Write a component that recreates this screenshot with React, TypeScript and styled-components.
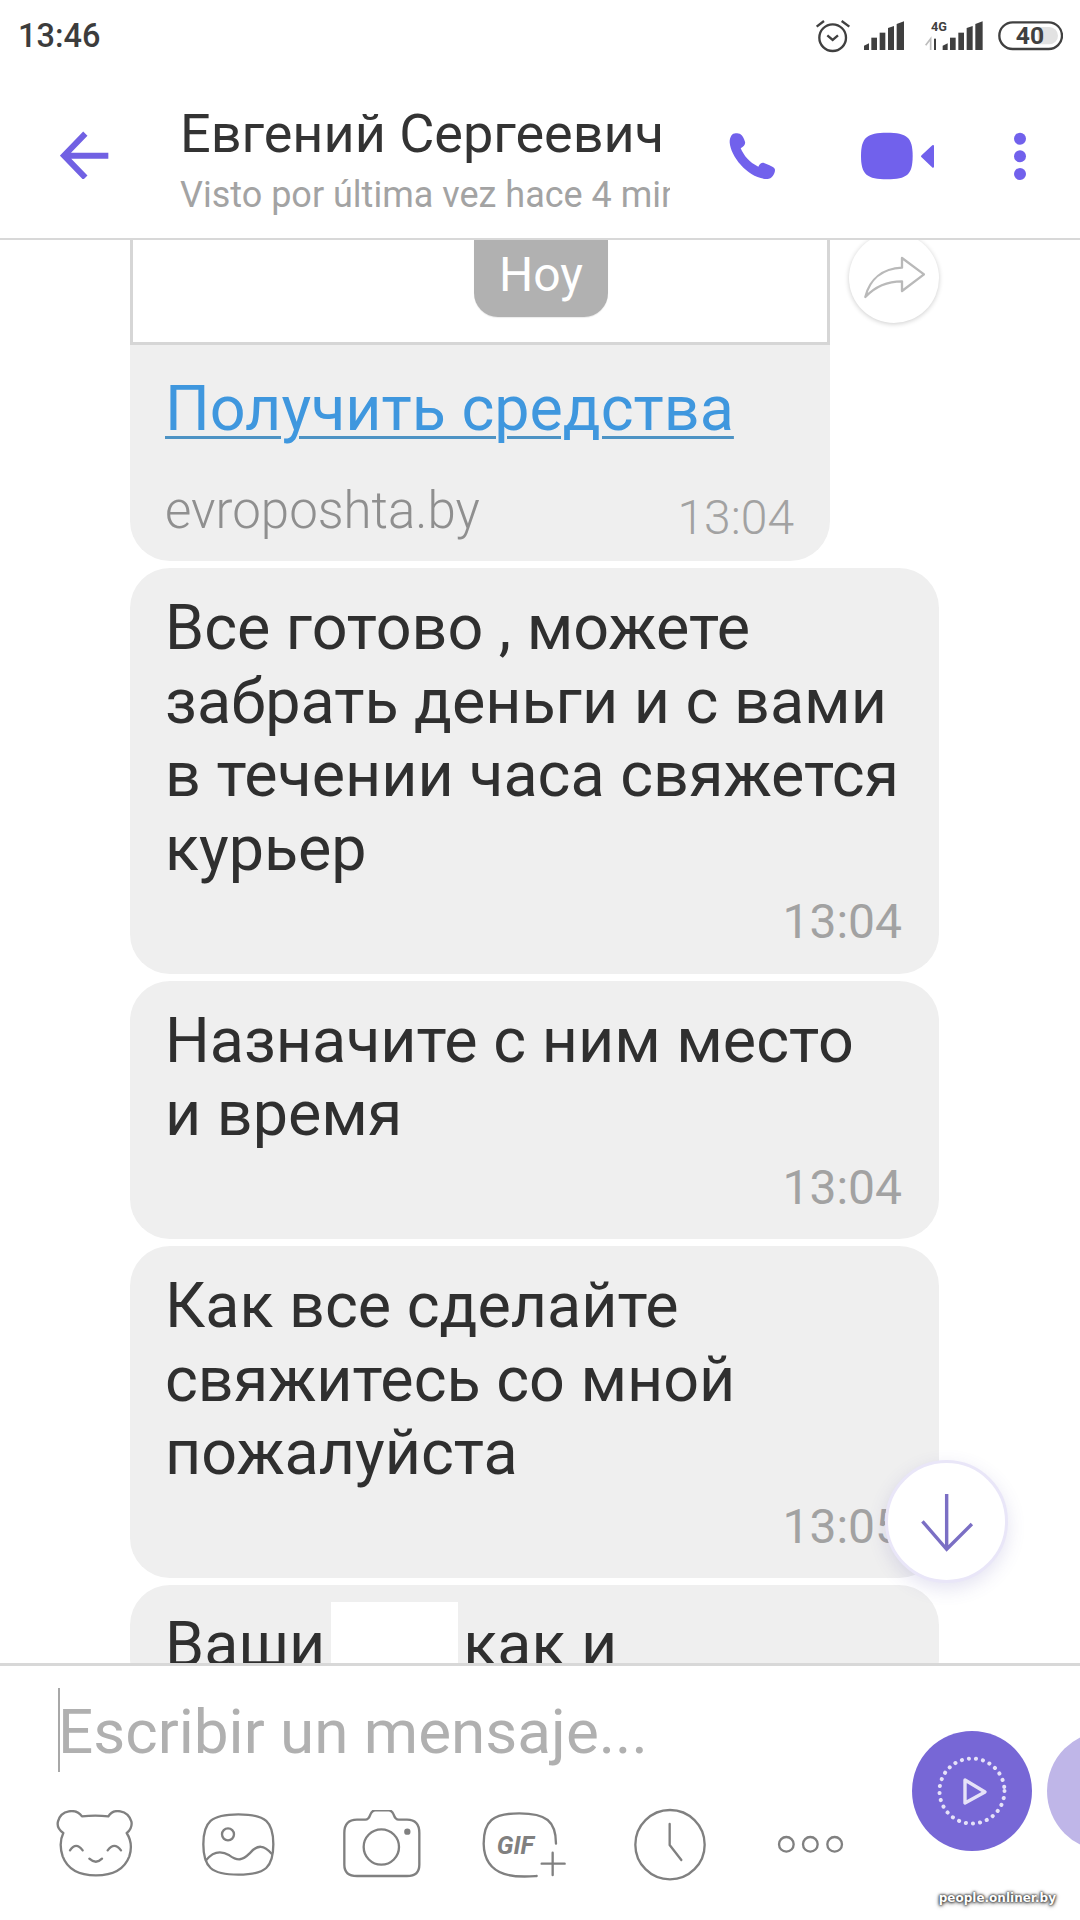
import React from "react";
import styled, { createGlobalStyle } from "styled-components";

const GlobalStyle = createGlobalStyle`
  html, body { margin: 0; padding: 0; background: #fff; }
  * { box-sizing: border-box; }
`;

const Page = styled.div`
  position: relative;
  width: 1080px;
  height: 1920px;
  overflow: hidden;
  display: flex;
  flex-direction: column;
  background: #fff;
  font-family: Roboto, "Noto Sans", sans-serif;
`;

const StatusBar = styled.div`
  height: 70px;
  flex: none;
  display: flex;
  align-items: center;
  justify-content: space-between;
  padding: 2px 17px 0 18px;
`;

const Clock = styled.span`
  font-size: 32.5px;
  font-weight: 500;
  color: #3c3c3c;
`;

const StatusIcons = styled.div`
  display: flex;
  align-items: center;
  gap: 13px;
`;

const NetworkGroup = styled.span`
  display: flex;
  margin: 0 2px 0 8px;
`;

const Header = styled.header`
  height: 170px;
  flex: none;
  display: flex;
  align-items: flex-start;
  border-bottom: 2px solid #d8d8d8;
  padding: 34px 0 0 60px;
`;

const BackIcon = styled.svg`
  width: 50px;
  height: 48px;
  margin: 27px 70px 0 0;
  flex: none;
`;

const Titles = styled.div`
  width: 490px;
  flex: none;
`;

const Title = styled.div`
  font-size: 54px;
  line-height: 60px;
  color: #333;
  white-space: nowrap;
`;

const Subtitle = styled.div`
  font-size: 36px;
  line-height: 44px;
  margin-top: 9px;
  color: #a3a3a3;
  white-space: nowrap;
  overflow: hidden;
`;

const HeaderIcon = styled.svg<{ $left: number }>`
  flex: none;
  margin: 28px 0 0 ${(p) => p.$left}px;
`;

const Chat = styled.main`
  position: relative;
  flex: 1;
  min-height: 0;
  overflow: hidden;
  display: flex;
  flex-direction: column;
  gap: 7px;
  padding-left: 130px;
`;

const DatePill = styled.div`
  position: absolute;
  top: 0;
  left: 474px;
  width: 134px;
  height: 77px;
  border-radius: 0 0 24px 24px;
  background: #b1b1b1;
  box-shadow: 0 1px 1px rgba(0, 0, 0, 0.08);
  color: #fff;
  font-size: 48px;
  line-height: 70px;
  text-align: center;
`;

const LinkRow = styled.div`
  display: flex;
  flex: none;
  align-items: flex-start;
`;

const LinkBubble = styled.div`
  width: 700px;
  flex: none;
  background: #efefef;
  border-radius: 0 0 40px 40px;
  overflow: hidden;
`;

const Preview = styled.div`
  height: 105px;
  background: #fff;
  border: 3px solid #d6d6d6;
  border-top: 0;
`;

const LinkBody = styled.div`
  padding: 28px 36px 0 35px;
  height: 216px;
`;

const LinkText = styled.a`
  display: block;
  font-size: 62.8px;
  line-height: 72px;
  color: #3f97de;
  text-decoration: underline;
  text-decoration-thickness: 3px;
  text-underline-offset: 6px;
  text-decoration-color: #4d93c4;
  white-space: nowrap;
`;

const LinkMeta = styled.div`
  display: flex;
  justify-content: space-between;
  align-items: flex-start;
  margin-top: 36px;
`;

const Domain = styled.span`
  font-size: 51px;
  line-height: 60px;
  font-weight: 300;
  color: #8f8f8f;
`;

const ForwardButton = styled.div`
  width: 90px;
  height: 90px;
  margin: -7px 0 0 19px;
  border-radius: 50%;
  background: #fff;
  box-shadow: 0 1px 5px rgba(0, 0, 0, 0.2);
  display: flex;
  align-items: center;
  justify-content: center;
  flex: none;
`;

const Bubble = styled.div`
  width: 809px;
  flex: none;
  background: #efefef;
  border-radius: 40px;
  padding: 23px 37px 16.5px 35px;
`;

const MessageText = styled.div`
  font-size: 62.8px;
  line-height: 73.5px;
  color: #2f2f2f;
  white-space: nowrap;
`;

const Time = styled.div<{ $light?: boolean }>`
  font-size: 48px;
  line-height: 70px;
  font-weight: ${(p) => (p.$light ? 300 : 400)};
  margin-top: 2px;
  color: #a2a2a2;
  text-align: right;
`;

const Redacted = styled.span`
  position: relative;
  display: inline-block;
  width: 127px;
  height: 1px;
  margin: 0 5px 0 6px;

  &::after {
    content: "";
    position: absolute;
    left: 0;
    right: 0;
    bottom: -20px;
    height: 84px;
    background: #fff;
  }
`;

const ScrollDown = styled.div`
  position: absolute;
  top: 1220px;
  right: 72px;
  width: 123px;
  height: 123px;
  border-radius: 50%;
  background: #fff;
  border: 3px solid #e9e6f8;
  box-shadow: 0 6px 18px rgba(90, 80, 170, 0.16);
  display: flex;
  align-items: center;
  justify-content: center;
`;

const Composer = styled.footer`
  position: relative;
  height: 257px;
  flex: none;
  border-top: 3px solid #d8d8d8;
  display: flex;
  padding-left: 24px;
`;

const ComposerMain = styled.div`
  width: 888px;
  flex: none;
`;

const InputLine = styled.div`
  margin: 22px 0 0 34px;
  height: 84px;
  border-left: 2px solid #a8a8a8;
  font-size: 62px;
  line-height: 88px;
  color: #b0b0b0;
  white-space: nowrap;
  text-indent: -2px;
`;

const Tools = styled.div`
  display: grid;
  grid-template-columns: repeat(6, 143px);
  margin-top: 36px;
  height: 72px;
`;

const Tool = styled.div<{ $nudge?: number }>`
  display: flex;
  align-items: center;
  justify-content: center;
  padding-left: ${(p) => p.$nudge ?? 0}px;
`;

const Round = styled.div<{ $color: string }>`
  width: 120px;
  height: 120px;
  flex: none;
  margin: 65px 15px 0 0;
  border-radius: 50%;
  background: ${(p) => p.$color};
`;

const Watermark = styled.div`
  position: absolute;
  right: 24px;
  bottom: 14px;
  font-family: "DejaVu Sans", sans-serif;
  font-size: 12px;
  font-weight: 700;
  line-height: 16px;
  color: #fff;
  text-shadow: 0 0 3px #333, 0 0 2px #333, 0 1px 4px #444;
`;

const gray = "#808080";

const Icon = ({ x, y, w, h, children }: { x: number; y: number; w: number; h: number; children: React.ReactNode }) => (
  <svg width={w / 3} height={h / 3} viewBox={`${x} ${y} ${w} ${h}`} fill="none" stroke={gray} strokeWidth={7} strokeLinecap="round" strokeLinejoin="round">
    {children}
  </svg>
);

const StatusSvg = ({ x, w, children }: { x: number; w: number; children: React.ReactNode }) => (
  <svg width={w / 3} height={36} viewBox={`${x} 54 ${w} 108`} fill="none">
    {children}
  </svg>
);

const Bars = ({ x }: { x: number }) => (
  <g fill="#3f3f3f">
    <path d={`M${x} 150 V137 L${x + 15} 130 V150 Z`} />
    <rect x={x + 22} y={113} width={17} height={37} />
    <rect x={x + 47} y={98} width={17} height={52} />
    <path d={`M${x + 72} 150 V84 L${x + 90} 78 V150 Z`} />
    <path d={`M${x + 98} 150 V72 L${x + 120} 64 V150 Z`} />
  </g>
);

export default function App() {
  return (
    <Page>
      <GlobalStyle />
      <StatusBar>
        <Clock>13:46</Clock>
        <StatusIcons>
          <StatusSvg x={165} w={107}>
            <circle cx={218} cy={113} r={40} stroke="#404040" strokeWidth={7} />
            <path d="M202 106 L218 120 L234 106" stroke="#404040" strokeWidth={7} />
            <path d="M170 80 L192 63 M245 63 L268 80" stroke="#404040" strokeWidth={7} />
          </StatusSvg>
          <StatusSvg x={312} w={120}>
            <Bars x={312} />
          </StatusSvg>
          <NetworkGroup>
            <StatusSvg x={495} w={173}>
              <text x={513} y={93} fontFamily="Roboto" fontWeight={700} fontSize={38} fill="#404040">4G</text>
              <path d="M512 150 V116 L497 136" stroke="#bdbdbd" strokeWidth={5} />
              <path d="M525 150 V116" stroke="#404040" strokeWidth={6} />
              <Bars x={548} />
            </StatusSvg>
          </NetworkGroup>
          <StatusSvg x={716} w={196}>
            <rect x={720} y={67} width={188} height={80} rx={40} stroke="#404040" strokeWidth={7} />
            <path d="M835 81 H870 A26 26 0 0 1 870 133 H835 Z" fill="#e2e2e2" />
            <text x={812} y={132} textAnchor="middle" fontFamily="Roboto" fontWeight={700} fontSize={74} fill="#404040">40</text>
          </StatusSvg>
        </StatusIcons>
      </StatusBar>

      <Header>
        <BackIcon viewBox="60 64 150 144" fill="none" stroke="#7161e3" strokeWidth={18}>
          <path d="M136 72 L72 138 L136 204 M72 138 H205" />
        </BackIcon>
        <Titles>
          <Title>Евгений Сергеевич</Title>
          <Subtitle>Visto por última vez hace 4 min</Subtitle>
        </Titles>
        <HeaderIcon $left={59} width={48} height={48} viewBox="90 64 144 144">
          <path fill="#7161ec" d="M110 68 C100 68 92 78 92 95 C95 140 150 205 205 205 C218 205 228 190 228 178 C228 172 222 168 195 157 C188 155 182 160 178 168 C150 155 135 135 125 113 C135 107 140 100 138 93 C130 70 122 68 110 68 Z" />
        </HeaderIcon>
        <HeaderIcon $left={83} width={76} height={48} viewBox="484 64 228 144">
          <path fill="#7161ec" d="M565 66 C625 66 642 80 642 136 C642 192 625 206 565 206 C505 206 487 192 487 136 C487 80 505 66 565 66 Z" />
          <path fill="#7161ec" stroke="#7161ec" strokeWidth={6} strokeLinejoin="round" d="M703 106 V168 L670 137 Z" />
        </HeaderIcon>
        <HeaderIcon $left={77} width={14} height={48} viewBox="939 64 42 144">
          <g fill="#7161ec">
            <circle cx={960} cy={84} r={18} />
            <circle cx={960} cy={137} r={18} />
            <circle cx={960} cy={190} r={18} />
          </g>
        </HeaderIcon>
      </Header>

      <Chat>
        <LinkRow>
          <LinkBubble>
            <Preview />
            <LinkBody>
              <LinkText>Получить средства</LinkText>
              <LinkMeta>
                <Domain>evroposhta.by</Domain>
                <Time $light>13:04</Time>
              </LinkMeta>
            </LinkBody>
          </LinkBubble>
          <ForwardButton>
            <svg width={62} height={44} viewBox="485 443 186 130" fill="none" stroke="#b9b9b9" strokeWidth={7} strokeLinejoin="round">
              <path d="M492 565 C505 510 545 480 602 477 V448 L668 497 L602 547 V518 C560 518 520 535 492 565 Z" />
            </svg>
          </ForwardButton>
        </LinkRow>
        <Bubble>
          <MessageText>
            Все готово , можете<br />забрать деньги и с вами<br />в течении часа свяжется<br />курьер
          </MessageText>
          <Time>13:04</Time>
        </Bubble>
        <Bubble>
          <MessageText>
            Назначите с ним место<br />и время
          </MessageText>
          <Time>13:04</Time>
        </Bubble>
        <Bubble>
          <MessageText>
            Как все сделайте<br />свяжитесь со мной<br />пожалуйста
          </MessageText>
          <Time>13:05</Time>
        </Bubble>
        <Bubble>
          <MessageText>
            Ваши<Redacted />как и
          </MessageText>
        </Bubble>
        <DatePill>Hoy</DatePill>
        <ScrollDown>
          <svg width={54} height={60} viewBox="660 222 158 176" fill="none" stroke="#7b6fc4" strokeWidth={10}>
            <path d="M738 228 V390 M667 308 L738 390 L812 316" />
          </svg>
        </ScrollDown>
      </Chat>

      <Composer>
        <ComposerMain>
          <InputLine>Escribir un mensaje...</InputLine>
          <Tools>
            <Tool>
              <Icon x={50} y={56} w={235} h={210}>
                <path d="M128 75 Q168 71 207 75 C222 50 265 55 276 90 C280 105 270 120 262 125 C275 145 278 170 270 195 C255 235 220 252 170 252 C120 252 85 235 70 195 C62 170 62 145 72 125 C62 118 52 105 56 90 C65 55 110 50 128 75 Z" />
                <path d="M92 177 Q110 150 130 177 M205 177 Q225 150 245 177 M150 202 Q170 220 188 202" />
              </Icon>
            </Tool>
            <Tool>
              <Icon x={485} y={60} w={225} h={195}>
                <path d="M597 67 C680 67 702 90 702 157 C702 225 680 248 597 248 C515 248 492 225 492 157 C492 90 515 67 597 67 Z" />
                <circle cx={566} cy={127} r={18} />
                <path d="M500 205 C520 180 545 175 570 190 C595 208 610 205 630 185 C655 155 675 160 697 185" />
              </Icon>
            </Tool>
            <Tool>
              <Icon x={905} y={56} w={240} h={210}>
                <path d="M950 85 H975 Q985 85 990 70 Q995 57 1005 57 H1045 Q1055 57 1060 70 Q1065 85 1075 85 H1100 Q1137 85 1137 125 V220 Q1137 254 1100 254 H950 Q912 254 912 220 V125 Q912 85 950 85 Z" />
                <circle cx={1023} cy={167} r={53} />
                <circle cx={1101} cy={121} r={6} fill={gray} />
              </Icon>
            </Tool>
            <Tool>
              <Icon x={68} y={60} w={254} h={200}>
                <path d="M232 255 C190 258 75 270 73 158 C73 90 100 67 180 67 C260 67 290 90 290 158" />
                <path d="M280 185 V252 M247 218 H316" />
                <text x={112} y={190} fontFamily="Roboto" fontWeight={700} fontStyle="italic" fontSize={76} fill={gray} stroke="none">GIF</text>
              </Icon>
            </Tool>
            <Tool $nudge={5}>
              <Icon x={522} y={54} w={222} h={220}>
                <circle cx={633} cy={164} r={104} />
                <path d="M632 102 V165 L667 210" />
              </Icon>
            </Tool>
            <Tool>
              <Icon x={950} y={132} w={202} h={56}>
                <circle cx={978} cy={160} r={22} />
                <circle cx={1050} cy={160} r={22} />
                <circle cx={1123} cy={160} r={22} />
              </Icon>
            </Tool>
          </Tools>
        </ComposerMain>
        <Round $color="#7767d6">
          <svg width={120} height={120} viewBox="0 0 120 120" fill="none" stroke="#e6e2f8" strokeLinecap="round" strokeLinejoin="round">
            <circle cx={60} cy={60} r={32.5} strokeWidth={4} strokeDasharray="0.1 7.03" />
            <path d="M53 49 L73 61 L53 72 Z" strokeWidth={3.4} />
          </svg>
        </Round>
        <Round $color="#bfb6e8" />
        <Watermark>people.onliner.by</Watermark>
      </Composer>
    </Page>
  );
}
